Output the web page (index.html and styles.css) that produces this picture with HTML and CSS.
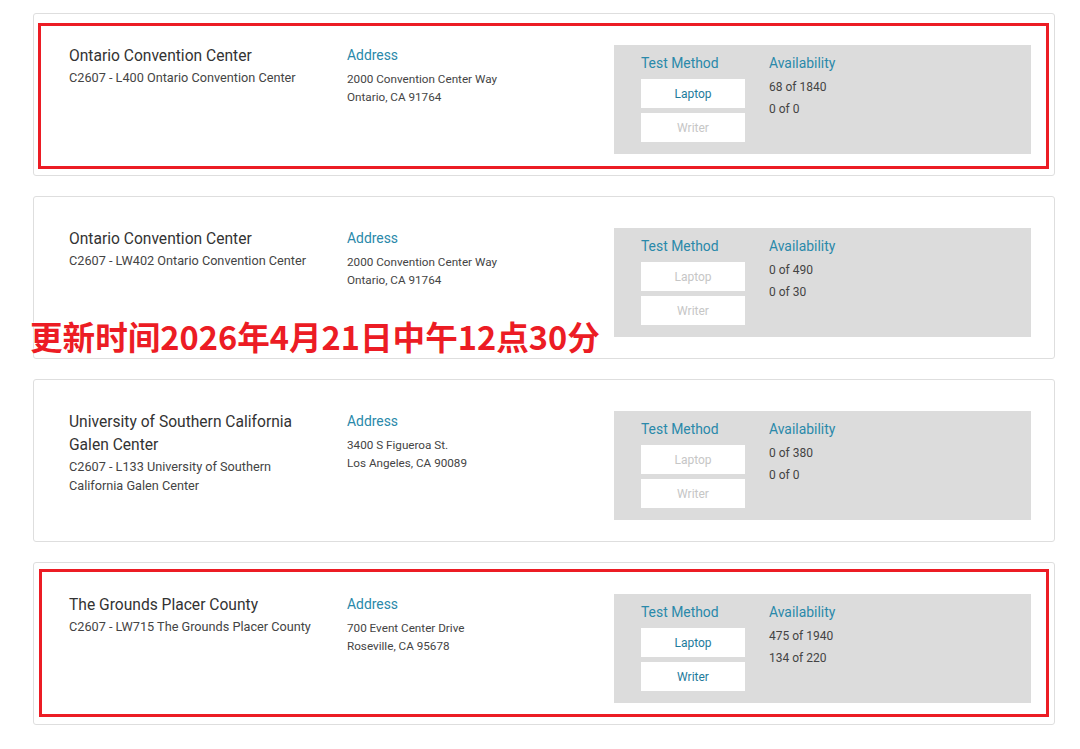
FILE: index.html
```html
<!DOCTYPE html>
<html lang="en">
<head>
  <meta charset="utf-8" />
  <title>Test Centers</title>
  <meta name="viewport" content="width=device-width, initial-scale=1" />
  <link rel="stylesheet" href="styles.css">
</head>
<body>
  <main class="list">

    <section class="card">
      <div class="venue">
        <p class="venue-name">Ontario Convention Center</p>
        <p class="venue-code">C2607 - L400 Ontario Convention Center</p>
      </div>
      <div class="address">
        <p class="heading">Address</p>
        <p>2000 Convention Center Way</p>
        <p>Ontario, CA 91764</p>
      </div>
      <div class="panel">
        <div class="methods">
          <p class="heading">Test Method</p>
          <button class="method">Laptop</button>
          <button class="method off">Writer</button>
        </div>
        <div class="avail">
          <p class="heading">Availability</p>
          <p>68 of 1840</p>
          <p>0 of 0</p>
        </div>
      </div>
      <div class="mark mark-top"></div>
    </section>

    <section class="card">
      <div class="venue">
        <p class="venue-name">Ontario Convention Center</p>
        <p class="venue-code">C2607 - LW402 Ontario Convention Center</p>
      </div>
      <div class="address">
        <p class="heading">Address</p>
        <p>2000 Convention Center Way</p>
        <p>Ontario, CA 91764</p>
      </div>
      <div class="panel">
        <div class="methods">
          <p class="heading">Test Method</p>
          <button class="method off">Laptop</button>
          <button class="method off">Writer</button>
        </div>
        <div class="avail">
          <p class="heading">Availability</p>
          <p>0 of 490</p>
          <p>0 of 30</p>
        </div>
      </div>
    </section>

    <section class="card">
      <div class="venue">
        <p class="venue-name">University of Southern California Galen Center</p>
        <p class="venue-code">C2607 - L133 University of Southern California Galen Center</p>
      </div>
      <div class="address">
        <p class="heading">Address</p>
        <p>3400 S Figueroa St.</p>
        <p>Los Angeles, CA 90089</p>
      </div>
      <div class="panel">
        <div class="methods">
          <p class="heading">Test Method</p>
          <button class="method off">Laptop</button>
          <button class="method off">Writer</button>
        </div>
        <div class="avail">
          <p class="heading">Availability</p>
          <p>0 of 380</p>
          <p>0 of 0</p>
        </div>
      </div>
    </section>

    <section class="card">
      <div class="venue">
        <p class="venue-name">The Grounds Placer County</p>
        <p class="venue-code">C2607 - LW715 The Grounds Placer County</p>
      </div>
      <div class="address">
        <p class="heading">Address</p>
        <p>700 Event Center Drive</p>
        <p>Roseville, CA 95678</p>
      </div>
      <div class="panel">
        <div class="methods">
          <p class="heading">Test Method</p>
          <button class="method">Laptop</button>
          <button class="method">Writer</button>
        </div>
        <div class="avail">
          <p class="heading">Availability</p>
          <p>475 of 1940</p>
          <p>134 of 220</p>
        </div>
      </div>
      <div class="mark mark-bottom"></div>
    </section>

  </main>

  <div class="notice">更新时间2026年4月21日中午12点30分</div>
</body>
</html>
```

FILE: styles.css
```css
:root {
  --teal: #2a89aa;
  --btn: #1e7b9c;
  --text: #333333;
  --sub: #444444;
  --panel: #dcdcdc;
  --border: #dedede;
  --red: #ec1c24;
}

* { box-sizing: border-box; margin: 0; padding: 0; }

body {
  font-family: Roboto, "Liberation Sans", Arial, sans-serif;
  background: #fff;
  color: var(--text);
  position: relative;
}

.list {
  padding: 13px 0 0 33px;
  display: flex;
  flex-direction: column;
  gap: 20px;
}

.card {
  position: relative;
  width: 1022px;
  height: 163px;
  border: 1px solid var(--border);
  border-radius: 3px;
  padding: 31px 23px 0 35px;
  display: flex;
  align-items: flex-start;
}

.venue {
  width: 278px;
  padding-right: 28px;
}

.venue-name {
  font-size: 15.6px;
  line-height: 23px;
  color: var(--text);
}

.venue-code {
  font-size: 12.7px;
  line-height: 19px;
  color: var(--sub);
}

.address {
  width: 267px;
  font-size: 11.7px;
  line-height: 18px;
  color: var(--sub);
}

.heading {
  font-size: 13.9px;
  line-height: 20px;
  color: var(--teal);
}

.address .heading {
  margin-bottom: 5px;
}

.panel {
  width: 417px;
  height: 109px;
  background: var(--panel);
  padding: 8px 0 0 27px;
  display: flex;
}

.methods {
  width: 128px;
  display: flex;
  flex-direction: column;
  gap: 5px;
}

.methods .heading {
  margin-bottom: 1px;
}

.method {
  width: 104px;
  height: 29px;
  border: none;
  background: #fff;
  font-family: inherit;
  font-size: 12px;
  color: var(--btn);
}

.method.off {
  color: #c6c6c6;
}

.avail {
  font-size: 12px;
  line-height: 22px;
  color: var(--sub);
}

.avail .heading {
  margin-bottom: 3px;
}

/* red annotation frames */
.mark {
  position: absolute;
  border: 3px solid var(--red);
  pointer-events: none;
}

.mark-top {
  left: 4px;
  top: 9px;
  width: 1011px;
  height: 146px;
}

.mark-bottom {
  left: 5px;
  top: 6px;
  width: 1010px;
  height: 148px;
}

.notice {
  position: absolute;
  left: 30px;
  top: 314px;
  font-family: "Noto Sans CJK SC", sans-serif;
  font-weight: 700;
  font-size: 32.6px;
  line-height: 44px;
  color: var(--red);
  text-shadow: 0 0 2px #fff, 0 0 2px #fff, 0 0 3px #fff;
  white-space: nowrap;
}
```
